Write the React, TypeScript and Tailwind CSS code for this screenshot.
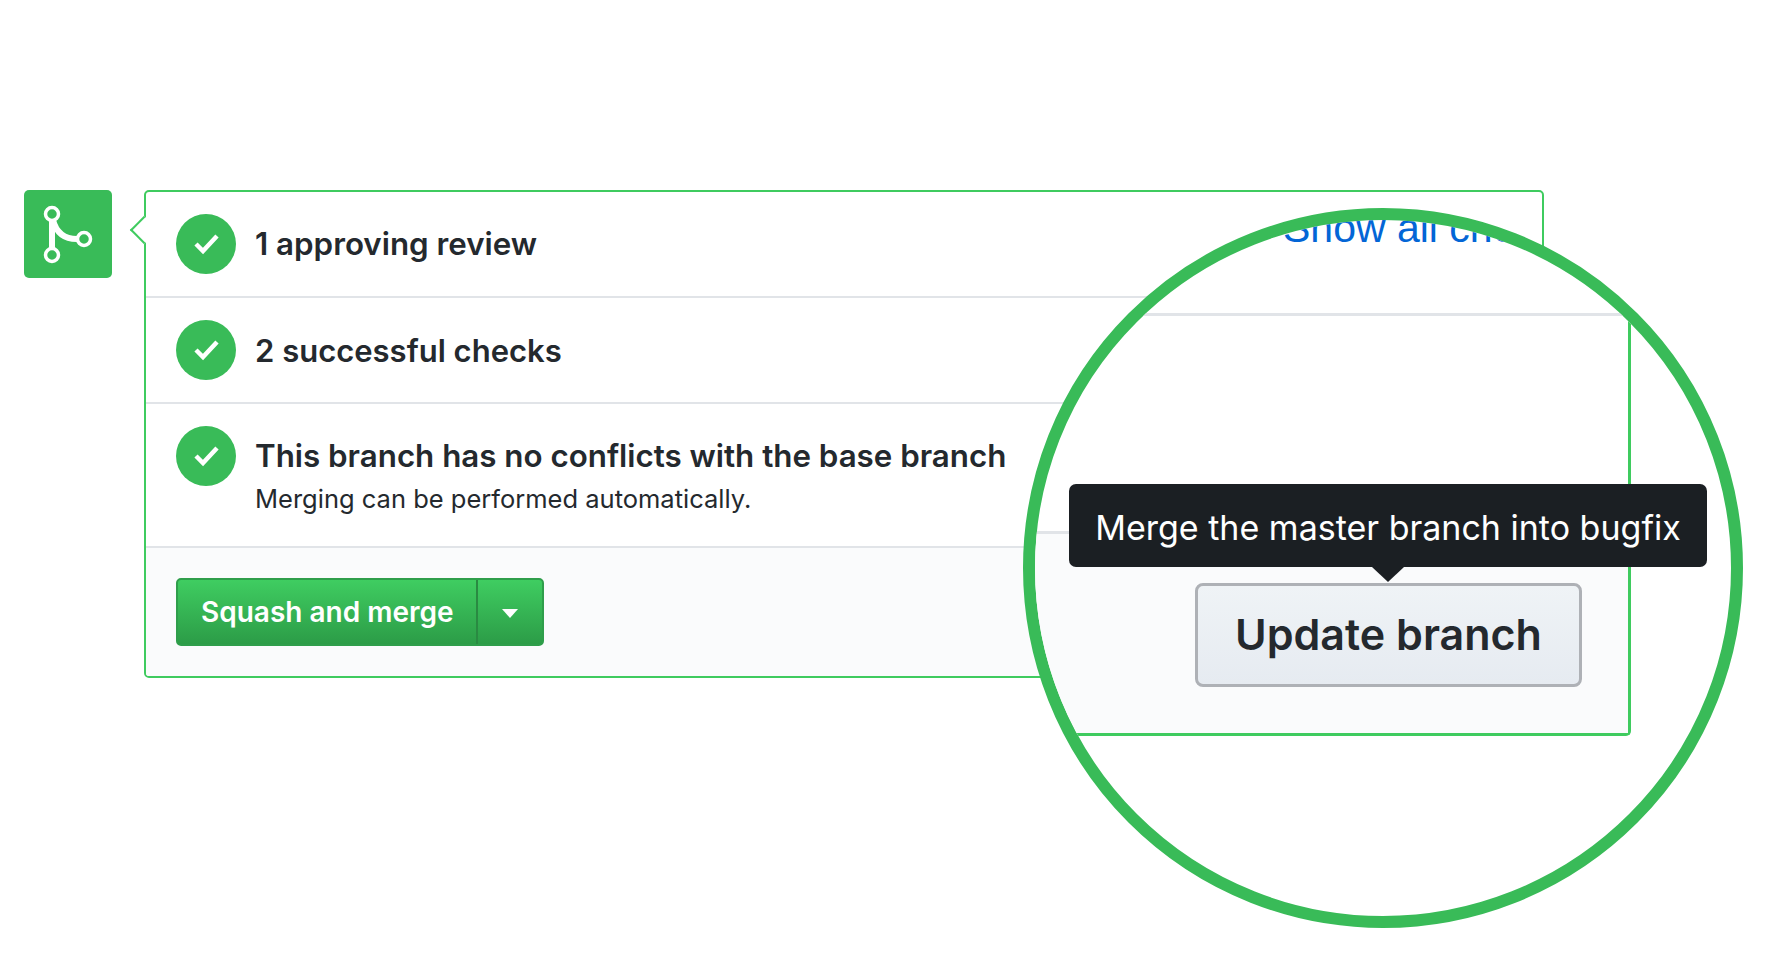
const fontStack = { fontFamily: "Inter, 'Noto Sans', sans-serif" }

function CheckBadge() {
  return (
    <div className="w-[60px] h-[60px] shrink-0 rounded-full bg-[#39bb58] flex items-center justify-center">
      <svg width="60" height="60" viewBox="0 0 60 60" fill="none">
        <path d="M20 30l7 7 14-15" stroke="#fff" strokeWidth="4.5" />
      </svg>
    </div>
  )
}

function MergeIcon() {
  return (
    <div className="w-[88px] h-[88px] shrink-0 rounded-[5px] bg-[#39bb58] flex items-center justify-center">
      <svg width="88" height="88" viewBox="0 0 88 88" fill="none" stroke="#fff">
        <path d="M28 30v28" strokeWidth="6" />
        <path d="M29 30c3 12 11 19 24 19" strokeWidth="6" />
        <circle cx="28" cy="24" r="6.5" strokeWidth="3.5" fill="#39bb58" />
        <circle cx="28" cy="65" r="6.5" strokeWidth="3.5" fill="#39bb58" />
        <circle cx="60" cy="49" r="6.5" strokeWidth="3.5" fill="#39bb58" />
      </svg>
    </div>
  )
}

function MergeBox() {
  return (
    <div className="relative w-[1400px] h-[488px] rounded-[5px] border-2 border-[#3fcb5f] bg-white flex flex-col">
      <div className="absolute left-[-12px] top-[28px] w-[20px] h-[20px] rotate-45 bg-white border-l-2 border-b-2 border-[#3fcb5f]" />
      <div className="relative h-[106px] border-b-2 border-[#e1e4e8] pl-[30px] pt-[22px] flex gap-[19px]">
        <CheckBadge />
        <div className="text-[31.3px] leading-[61px] font-semibold text-[#24292e]">1 approving review</div>
      </div>
      <div className="h-[106px] border-b-2 border-[#e1e4e8] pl-[30px] pt-[22px] flex gap-[19px]">
        <CheckBadge />
        <div className="text-[31px] leading-[61px] font-semibold text-[#24292e]">2 successful checks</div>
      </div>
      <div className="h-[144px] border-b-2 border-[#e1e4e8] pl-[30px] pt-[22px] flex gap-[19px]">
        <CheckBadge />
        <div>
          <div className="text-[31.3px] leading-[61px] font-semibold text-[#24292e]">This branch has no conflicts with the base branch</div>
          <div className="text-[25.5px] leading-[24px] text-[#24292e]">Merging can be performed automatically.</div>
        </div>
      </div>
      <div className="flex-1 rounded-b-[3px] bg-[#fafbfc] pl-[30px] pt-[30px]">
        <div className="w-[368px] h-[68px] flex rounded-[5px] border-2 border-[#2f9e4b] bg-gradient-to-b from-[#3fcd61] to-[#2c9c47] text-white">
          <div className="w-[300px] border-r-2 border-[#2a8a42] pl-[23px] text-[28px] leading-[64px] font-semibold whitespace-nowrap">Squash and merge</div>
          <div className="flex-1 flex items-center justify-center">
            <svg width="16" height="9" viewBox="0 0 16 9" className="mt-[2px]">
              <path d="M0 0h16L8 9z" fill="#fff" />
            </svg>
          </div>
        </div>
      </div>
    </div>
  )
}

function Magnifier() {
  return (
    <div className="absolute left-[1023px] top-[208px] w-[720px] h-[720px] rounded-full border-[12px] border-[#39bb58] bg-white overflow-hidden">
      <div className="absolute left-0 top-0 w-[596px] h-[516px] flex flex-col border-r-[3px] border-b-[3px] border-[#3fcb5f] rounded-br-[5px]">
        <div className="h-[96px] border-b-[3px] border-[#e1e4e8] pl-[248px] text-[41px] leading-[46px] text-[#0366d6] whitespace-nowrap font-['Liberation_Sans',sans-serif]">
          <div className="-mt-[15px]">Show all checks</div>
        </div>
        <div className="h-[218px] border-b-[3px] border-[#e1e4e8]" />
        <div className="flex-1 bg-[#fafbfc] flex justify-end pt-[49px] pr-[46px]">
          <div className="w-[387px] h-[104px] flex items-center justify-center rounded-[8px] border-[3px] border-[#aeb1b6] bg-gradient-to-b from-[#eff3f6] to-[#e6ebf1] text-[43px] font-semibold text-[#24292e] pb-[2px]">
            Update branch
          </div>
        </div>
      </div>
      <div className="absolute left-[34px] top-[264px] w-[638px] h-[83px] rounded-[7px] bg-[#1b1f23] flex items-center justify-center text-[34px] pt-[3px] text-white whitespace-nowrap">
        Merge the master branch into bugfix
        <svg width="32" height="15" viewBox="0 0 32 15" className="absolute left-[303px] top-[83px]">
          <path d="M0 0h32L16 15z" fill="#1b1f23" />
        </svg>
      </div>
    </div>
  )
}

export default function App() {
  return (
    <div className="relative w-[1781px] h-[961px] bg-white overflow-hidden" style={fontStack}>
      <div className="flex gap-[32px] pl-[24px] pt-[190px]">
        <MergeIcon />
        <MergeBox />
      </div>
      <Magnifier />
    </div>
  )
}
